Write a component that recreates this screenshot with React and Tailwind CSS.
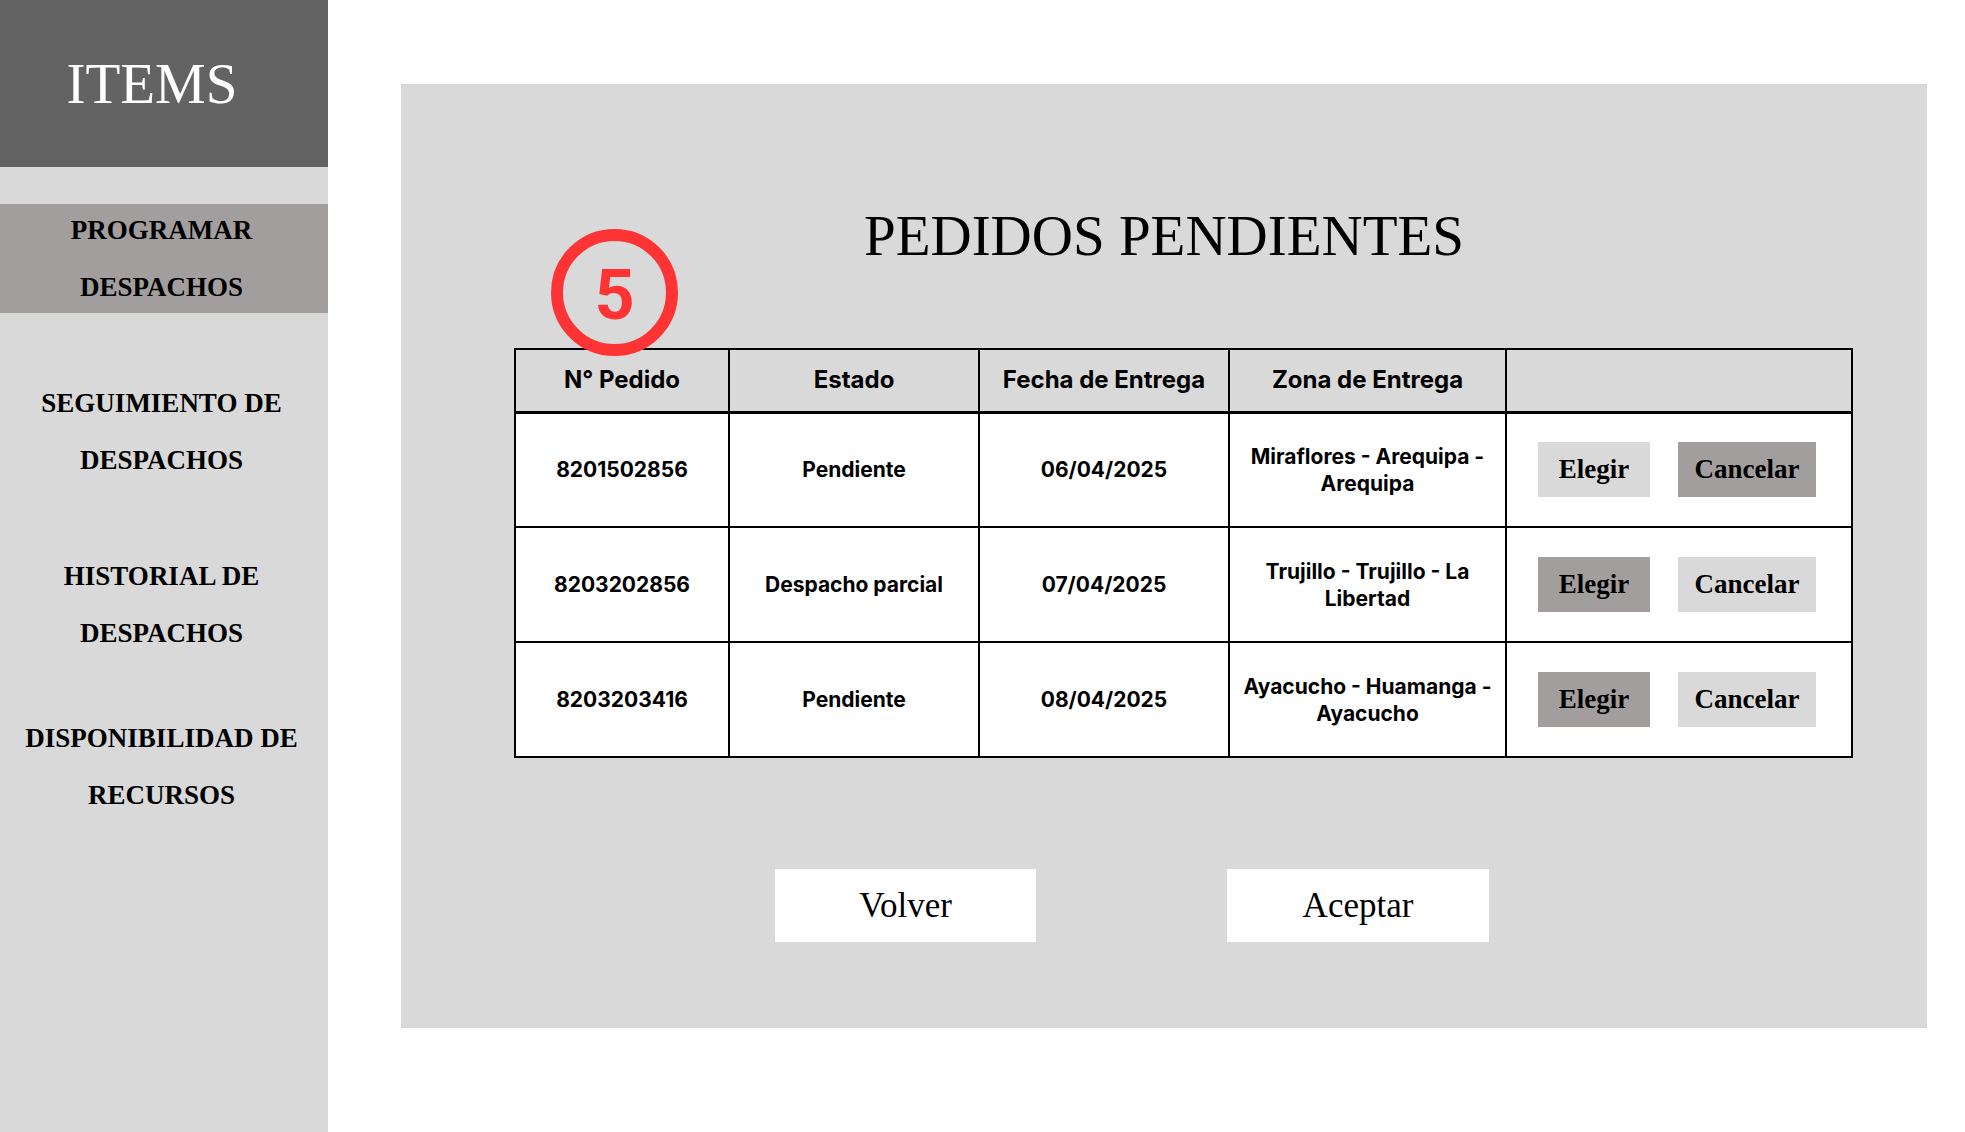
import React from 'react'

const rows = [
  { id: '8201502856', estado: 'Pendiente', fecha: '06/04/2025', zona: ['Miraflores - Arequipa -', 'Arequipa'], elegirActive: false },
  { id: '8203202856', estado: 'Despacho parcial', fecha: '07/04/2025', zona: ['Trujillo - Trujillo - La', 'Libertad'], elegirActive: true },
  { id: '8203203416', estado: 'Pendiente', fecha: '08/04/2025', zona: ['Ayacucho - Huamanga -', 'Ayacucho'], elegirActive: true },
]

const navItems = [
  { lines: ['SEGUIMIENTO DE', 'DESPACHOS'], mt: 'mt-[62px]' },
  { lines: ['HISTORIAL DE', 'DESPACHOS'], mt: 'mt-[59px]' },
  { lines: ['DISPONIBILIDAD DE', 'RECURSOS'], mt: 'mt-[48px]' },
]

function Sidebar() {
  return (
    <aside className="w-[328px] shrink-0 bg-[#d9d9d9] flex flex-col">
      <div className="h-[167px] bg-[#636363] flex items-center justify-center pr-6 text-white text-[57px] leading-none">
        ITEMS
      </div>
      <div className="mt-[37px] h-[109px] bg-[#a39e9e] pr-[5px] flex flex-col justify-center text-center text-[27px] font-bold leading-[57px] text-black">
        <div>PROGRAMAR</div>
        <div>DESPACHOS</div>
      </div>
      {navItems.map((item) => (
        <div key={item.lines[0]} className={`${item.mt} pr-[5px] text-center text-[27px] font-bold leading-[57px] text-black whitespace-nowrap`}>
          {item.lines.map((l) => (
            <div key={l}>{l}</div>
          ))}
        </div>
      ))}
    </aside>
  )
}

function SmallButton({ active, children, width }) {
  return (
    <button
      className={`${width} h-[55px] ${active ? 'bg-[#a39e9e]' : 'bg-[#d9d9d9]'} text-[27px] font-bold text-black font-['Liberation_Serif',serif] leading-none`}
    >
      {children}
    </button>
  )
}

function OrdersTable() {
  const th = 'border-2 border-b-[3px] border-black text-[24px] font-bold text-black'
  const td = 'border-2 border-black bg-white text-center text-[21px] font-bold text-black'
  return (
    <table className="ml-[113px] w-[1337px] table-fixed border-collapse font-['Inter',sans-serif]">
      <colgroup>
        <col className="w-[214px]" />
        <col className="w-[250px]" />
        <col className="w-[250px]" />
        <col className="w-[277px]" />
        <col className="w-[346px]" />
      </colgroup>
      <thead>
        <tr className="h-[63px]">
          <th className={th}>N° Pedido</th>
          <th className={th}>Estado</th>
          <th className={th}>Fecha de Entrega</th>
          <th className={th}>Zona de Entrega</th>
          <th className={th}></th>
        </tr>
      </thead>
      <tbody>
        {rows.map((r) => (
          <tr key={r.id} className="h-[115px]">
            <td className={td}>{r.id}</td>
            <td className={td}>{r.estado}</td>
            <td className={td}>{r.fecha}</td>
            <td className={`${td} leading-[27px]`}>
              {r.zona.map((z) => (
                <div key={z} className="whitespace-nowrap">{z}</div>
              ))}
            </td>
            <td className="border-2 border-black bg-white">
              <div className="flex items-center gap-[28px] pl-[31px]">
                <SmallButton active={r.elegirActive} width="w-[112px]">Elegir</SmallButton>
                <SmallButton active={!r.elegirActive} width="w-[138px]">Cancelar</SmallButton>
              </div>
            </td>
          </tr>
        ))}
      </tbody>
    </table>
  )
}

export default function App() {
  return (
    <div className="flex min-h-screen bg-white font-['Liberation_Serif',serif]">
      <Sidebar />
      <main className="flex-1 pl-[73px] pr-[38px] pt-[84px]">
        <section className="relative h-[944px] bg-[#d9d9d9] pt-[123px]">
          <h1 className="text-center text-[57px] leading-none text-black">PEDIDOS PENDIENTES</h1>

          {/* step marker */}
          <div className="absolute left-[150px] top-[145px] z-10 w-[127px] h-[127px] rounded-full border-[12px] border-[#fe3434] flex items-center justify-center">
            <span className="text-[70px] font-bold leading-none text-[#fe3434] font-['Roboto',sans-serif] mt-[4px]">5</span>
          </div>

          <div className="mt-[84px]">
            <OrdersTable />
          </div>

          <div className="mt-[111px] ml-[374px] flex gap-[191px]">
            <button className="w-[261px] h-[73px] bg-white text-[35px] text-black leading-none">Volver</button>
            <button className="w-[262px] h-[73px] bg-white text-[35px] text-black leading-none">Aceptar</button>
          </div>
        </section>
      </main>
    </div>
  )
}
